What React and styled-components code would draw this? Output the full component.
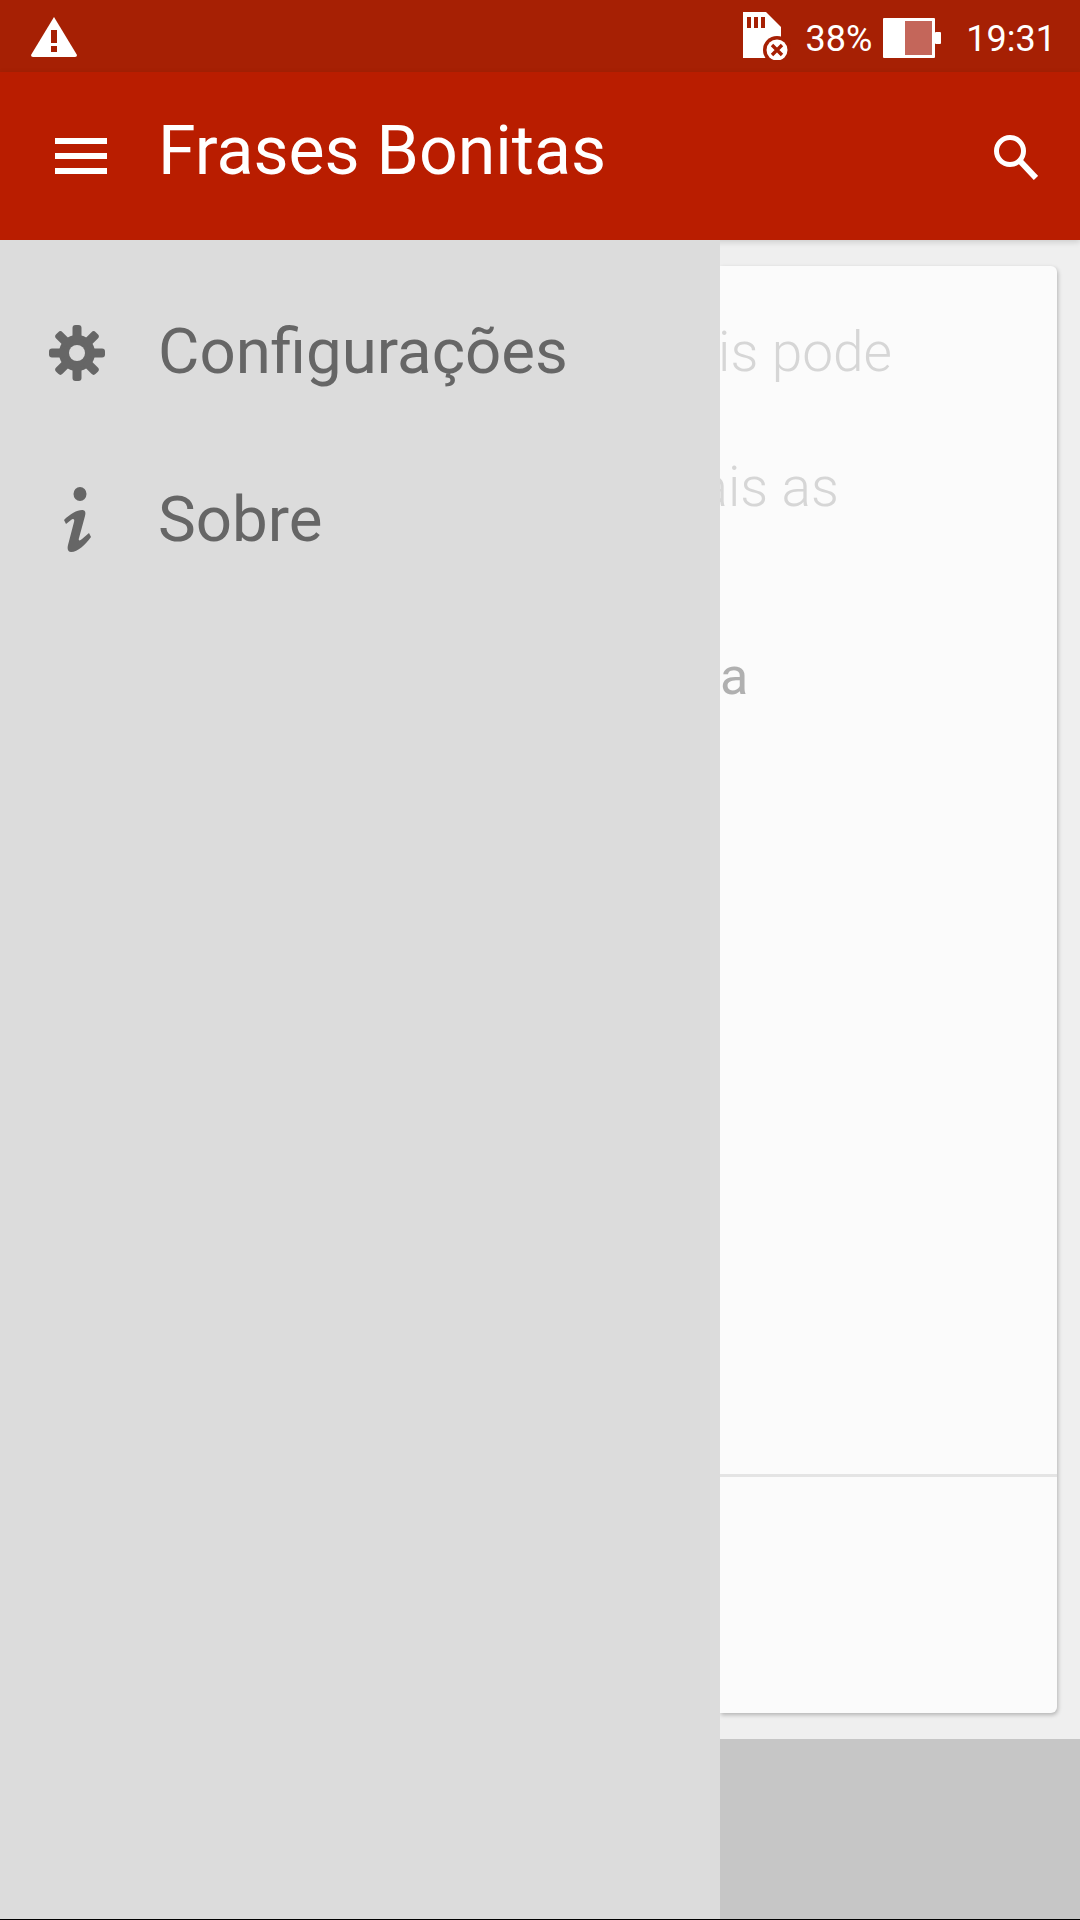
import styled, { createGlobalStyle } from 'styled-components';

const GlobalStyle = createGlobalStyle`
    html, body {
        margin: 0;
        padding: 0;
        background: #EFEFEF;
    }
    * {
        box-sizing: border-box;
    }
`;

const TEETH = [0, 45, 90, 135, 180, 225, 270, 315];

function WarningIcon() {
    return (
        <StatusSvg $w={46} $h={40} $top={2} viewBox="0 0 46 40">
            <path fill="#fff" d="M23 0 L46 38 Q46 40 44 40 L2 40 Q0 40 0 38 Z" />
            <rect x="20" y="13" width="6" height="13" fill="#A62004" />
            <rect x="20" y="29" width="6" height="6" fill="#A62004" />
        </StatusSvg>
    );
}

function SdErrorIcon() {
    return (
        <StatusSvg $w={49} $h={48} viewBox="0 0 49 48">
            <path fill="#fff" d="M1 0 H24 L39 15 V46 H1 Z" />
            <rect x="5" y="5" width="4" height="11" fill="#A62004" />
            <rect x="12" y="5" width="4" height="11" fill="#A62004" />
            <rect x="19" y="5" width="4" height="11" fill="#A62004" />
            <circle cx="35" cy="38" r="14" fill="#A62004" />
            <circle cx="35" cy="38" r="10.5" fill="#fff" />
            <path d="M30 33 L40 43 M40 33 L30 43" stroke="#A62004" strokeWidth="3.4" />
        </StatusSvg>
    );
}

function BatteryIcon() {
    return (
        <StatusSvg $w={58} $h={40} $top={4} viewBox="0 0 58 40">
            <rect x="0" y="0" width="52" height="40" rx="1" fill="#fff" />
            <rect x="52" y="14" width="6" height="12" rx="1" fill="#fff" />
            <rect x="22" y="3" width="27" height="34" fill="#C4665A" />
        </StatusSvg>
    );
}

function MenuIcon() {
    return (
        <svg width="52" height="38" viewBox="0 0 52 38">
            <rect x="0" y="1" width="52" height="6" fill="#fff" />
            <rect x="0" y="16" width="52" height="6" fill="#fff" />
            <rect x="0" y="31" width="52" height="6" fill="#fff" />
        </svg>
    );
}

function SearchIcon() {
    return (
        <svg width="46" height="48" viewBox="0 0 46 48">
            <circle cx="18" cy="19" r="13.5" fill="none" stroke="#fff" strokeWidth="5" />
            <path d="M28 29 L44 46" stroke="#fff" strokeWidth="6" />
        </svg>
    );
}

function GearIcon() {
    return (
        <svg width="56" height="58" viewBox="0 0 56 58">
            <g fill="#666">
                <circle cx="28" cy="29" r="18" />
                {TEETH.map(deg => (
                    <rect key={deg} x="23.5" y="1" width="9" height="16" rx="3" transform={`rotate(${deg} 28 29)`} />
                ))}
            </g>
            <circle cx="28" cy="29" r="8" fill="#DCDCDC" />
        </svg>
    );
}

function InfoIcon() {
    return (
        <svg width="28" height="66" viewBox="0 0 28 66">
            <ellipse cx="17" cy="7" rx="6.5" ry="7" fill="#666" />
            <path
                fill="#666"
                d="M1 33 C7 27 14 23 19 23 C22 23 23 25 22 29 L16 51 C15 54 17 54 19 52 L26 46 L28 50 C22 58 15 65 8 65 C5 65 4 62 5 58 L11 35 C12 32 10 31 8 33 L3 37 Z"
            />
        </svg>
    );
}

export default function App() {
    return (
        <>
            <GlobalStyle />
            <Page>
                <StatusBar>
                    <WarningIcon />
                    <StatusRight>
                        <SdErrorIcon />
                        <Percent>38%</Percent>
                        <BatteryIcon />
                        <Clock>19:31</Clock>
                    </StatusRight>
                </StatusBar>
                <AppBar>
                    <MenuIcon />
                    <Title>Frases Bonitas</Title>
                    <SearchIcon />
                </AppBar>
                <Body>
                    <Drawer>
                        <DrawerItem>
                            <DrawerIcon $top={4}><GearIcon /></DrawerIcon>
                            Configurações
                        </DrawerItem>
                        <DrawerItem>
                            <DrawerIcon $top={2}><InfoIcon /></DrawerIcon>
                            Sobre
                        </DrawerItem>
                    </Drawer>
                    <Content>
                        <Main>
                            <Card>
                                <CardBody>
                                    <Line $end={172}>mais pode</Line>
                                    <Line $end={119}>mais as</Line>
                                    <Author>a</Author>
                                </CardBody>
                                <CardFooter />
                            </Card>
                        </Main>
                        <Footer />
                    </Content>
                </Body>
            </Page>
        </>
    );
}

/* --- STYLES --- */
const Page = styled.div`
    width: 1080px;
    height: 1920px;
    display: flex;
    flex-direction: column;
    overflow: hidden;
    border-bottom: 1px solid #000;
    font-family: Roboto, "Liberation Sans", sans-serif;
`;
const StatusBar = styled.div`
    height: 72px;
    flex: none;
    background: #A62004;
    display: flex;
    align-items: center;
    justify-content: space-between;
    padding: 0 24px 0 31px;
    color: #fff;
`;
const StatusSvg = styled.svg`
    width: ${p => p.$w}px;
    height: ${p => p.$h}px;
    margin-top: ${p => p.$top || 0}px;
    display: block;
`;
const StatusRight = styled.div`
    display: flex;
    align-items: center;
`;
const Percent = styled.span`
    font-size: 36px;
    padding-top: 6px;
    margin-left: 15px;
    margin-right: 11px;
`;
const Clock = styled.span`
    font-size: 36px;
    padding-top: 6px;
    margin-left: 25px;
`;
const AppBar = styled.div`
    height: 168px;
    flex: none;
    background: #B91D00;
    display: flex;
    align-items: center;
    padding: 0 42px 0 55px;
    color: #fff;
    position: relative;
    z-index: 2;
    box-shadow: 0 2px 6px rgba(0, 0, 0, 0.15);
`;
const Title = styled.div`
    flex: 1;
    font-size: 68px;
    margin-left: 51px;
    margin-bottom: 10px;
`;
const Body = styled.div`
    flex: 1;
    display: flex;
    min-height: 0;
`;
const Drawer = styled.div`
    width: 720px;
    flex: none;
    background: #DCDCDC;
    padding-top: 27px;
    position: relative;
    z-index: 3;
`;
const DrawerItem = styled.div`
    height: 168px;
    display: flex;
    align-items: center;
    font-size: 63.6px;
    color: #666;
`;
const DrawerIcon = styled.div`
    width: 158px;
    padding-right: 4px;
    padding-top: ${p => p.$top}px;
    display: flex;
    justify-content: center;
    flex: none;
`;
const Content = styled.div`
    flex: 1;
    min-width: 0;
    display: flex;
    flex-direction: column;
    overflow: hidden;
`;
const Main = styled.div`
    flex: 1;
    background: #EFEFEF;
    padding: 26px 23px 26px 0;
    display: flex;
`;
const Card = styled.div`
    flex: 1;
    background: #FBFBFB;
    border-radius: 0 6px 6px 0;
    box-shadow: 1px 2px 4px rgba(0, 0, 0, 0.25);
    display: flex;
    flex-direction: column;
`;
const CardBody = styled.div`
    flex: 1;
    padding-top: 19px;
    border-bottom: 3px solid #E4E4E4;
`;
const CardFooter = styled.div`
    height: 236px;
    flex: none;
`;
const Line = styled.div`
    width: ${p => p.$end}px;
    height: 135px;
    line-height: 135px;
    display: flex;
    justify-content: flex-end;
    white-space: nowrap;
    font-size: 55px;
    font-weight: 300;
    color: #D6D6D6;
`;
const Author = styled.div`
    margin-top: 54px;
    height: 135px;
    line-height: 135px;
    font-size: 52px;
    color: #B0B0B0;
`;
const Footer = styled.div`
    height: 180px;
    flex: none;
    background: #C6C6C6;
`;
